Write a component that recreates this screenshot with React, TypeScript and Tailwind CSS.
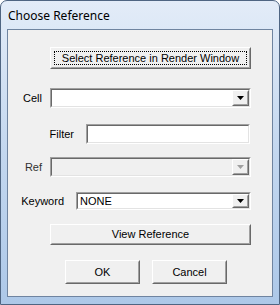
import React from "react";

const sunken =
  "border border-t-[#a0a0a0] border-l-[#a0a0a0] border-r-white border-b-white";
const sunkenInner =
  "border border-t-[#696969] border-l-[#696969] border-r-[#e3e3e3] border-b-[#e3e3e3]";
const raised =
  "border border-t-white border-l-white border-r-[#696969] border-b-[#696969]";
const raisedInner =
  "border border-t-[#f0f0f0] border-l-[#f0f0f0] border-r-[#a0a0a0] border-b-[#a0a0a0]";

function Button({
  label,
  className,
  focused,
}: {
  label: string;
  className: string;
  focused?: boolean;
}) {
  return (
    <div className={`${raised} bg-[#f0f0f0] ${className}`}>
      <div className={`${raisedInner} flex h-full w-full items-center justify-center p-[2px]`}>
        <div
          className={`flex h-full w-full items-center justify-center ${
            focused ? "border border-dotted border-black" : "border border-transparent"
          }`}
        >
          {label}
        </div>
      </div>
    </div>
  );
}

function Arrow({ disabled }: { disabled?: boolean }) {
  return (
    <div className={`${raised} h-full w-[17px] bg-[#f0f0f0]`}>
      <div className={`${raisedInner} flex h-full w-full items-center justify-center`}>
        <svg width="7" height="4" viewBox="0 0 7 4">
          <path d="M0 0h7L3.5 4z" fill={disabled ? "#a0a0a0" : "#000"} />
        </svg>
      </div>
    </div>
  );
}

function Combo({
  value,
  className,
  disabled,
}: {
  value?: string;
  className: string;
  disabled?: boolean;
}) {
  return (
    <div className={`${sunken} ${className}`}>
      <div
        className={`${sunkenInner} flex h-full w-full items-stretch ${
          disabled ? "bg-[#f0f0f0]" : "bg-white"
        }`}
      >
        <div className="flex flex-1 items-center pl-[2px]">{value}</div>
        <Arrow disabled={disabled} />
      </div>
    </div>
  );
}

function Row({
  label,
  labelWidth,
  pr,
  children,
  gray,
}: {
  label: string;
  labelWidth: string;
  pr: string;
  children: React.ReactNode;
  gray?: boolean;
}) {
  return (
    <div className="flex items-center">
      <div className={`${labelWidth} ${pr} text-right ${gray ? "text-[#303030]" : ""}`}>{label}</div>
      {children}
    </div>
  );
}

export default function App() {
  return (
    <div
      className="flex h-[305px] w-[280px] flex-col overflow-hidden rounded-t-[7px] border border-[#4f6582] bg-gradient-to-b from-[#e3ecf8] via-[#c3d7ef] to-[#adc8e8] text-[11px] text-black"
      style={{ fontFamily: '"Liberation Sans", Arial, sans-serif' }}
    >
      <div
        className="flex h-[28px] items-center pl-[7px] pt-[2px] text-[12px] text-black"
        style={{ fontFamily: '"Noto Sans", "Open Sans", sans-serif' }}
      >
        Choose Reference
      </div>
      <div className="mx-[6px] mb-[7px] flex flex-1 flex-col border border-[#6f84a0] bg-[#f0f0f0]">
        <div className="flex flex-col pt-[17px]">
          <div className="pl-[42px]">
            <Button
              label="Select Reference in Render Window"
              className="h-[22px] w-[201px]"
              focused
            />
          </div>
          <div className="mt-[19px]">
            <Row label="Cell" labelWidth="w-[42px]" pr="pr-[8px]">
              <Combo className="h-[20px] w-[201px]" />
            </Row>
          </div>
          <div className="mt-[16px]">
            <Row label="Filter" labelWidth="w-[78px]" pr="pr-[12px]">
              <div className={`${sunken} h-[20px] w-[164px]`}>
                <div className={`${sunkenInner} h-full w-full bg-white`} />
              </div>
            </Row>
          </div>
          <div className="mt-[13px]">
            <Row label="Ref" labelWidth="w-[42px]" pr="pr-[8px]" gray>
              <Combo className="h-[20px] w-[201px]" disabled />
            </Row>
          </div>
          <div className="mt-[15px]">
            <Row label="Keyword" labelWidth="w-[68px]" pr="pr-[12px]">
              <Combo value="NONE" className="h-[18px] w-[175px]" />
            </Row>
          </div>
          <div className="mt-[14px] pl-[42px]">
            <Button label="View Reference" className="h-[21px] w-[201px]" />
          </div>
          <div className="mt-[15px] flex gap-[12px] pl-[57px]">
            <Button label="OK" className="h-[24px] w-[75px]" />
            <Button label="Cancel" className="h-[24px] w-[75px]" />
          </div>
        </div>
      </div>
    </div>
  );
}
